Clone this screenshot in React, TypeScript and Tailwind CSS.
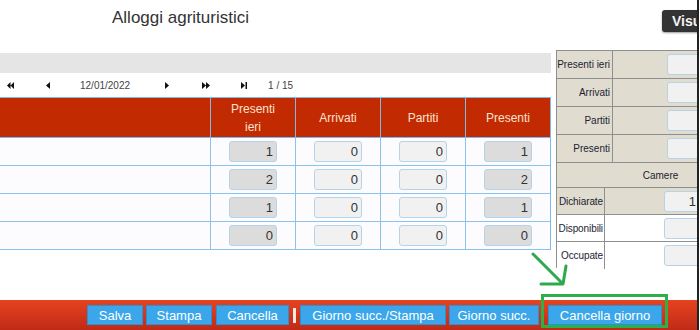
import React from 'react'

const rows = [
  { ieri: '1', arrivati: '0', partiti: '0', presenti: '1' },
  { ieri: '2', arrivati: '0', partiti: '0', presenti: '2' },
  { ieri: '1', arrivati: '0', partiti: '0', presenti: '1' },
  { ieri: '0', arrivati: '0', partiti: '0', presenti: '0' },
]

function Box({ value, readOnly, className = '' }: { value?: string; readOnly?: boolean; className?: string }) {
  return (
    <div
      className={
        'h-[21px] rounded-[3px] border border-[#b7d3e8] text-right pr-[3px] text-[13px] leading-[19px] text-[#333] ' +
        (readOnly ? 'bg-[#dcdcdc] ' : 'bg-[#f1f1f1] ') +
        className
      }
    >
      {value}
    </div>
  )
}

function NavIcon({ kind }: { kind: 'first' | 'prev' | 'next' | 'fast' | 'last' }) {
  if (kind === 'first')
    return (
      <svg width="7" height="7" viewBox="0 0 7 7">
        <path d="M3.5 0 L0 3.5 L3.5 7 Z M7 0 L3.5 3.5 L7 7 Z" fill="#111" />
      </svg>
    )
  if (kind === 'prev')
    return (
      <svg width="4" height="7" viewBox="0 0 4 7">
        <path d="M4 0 L0 3.5 L4 7 Z" fill="#111" />
      </svg>
    )
  if (kind === 'next')
    return (
      <svg width="4" height="7" viewBox="0 0 4 7">
        <path d="M0 0 L4 3.5 L0 7 Z" fill="#111" />
      </svg>
    )
  if (kind === 'fast')
    return (
      <svg width="8" height="7" viewBox="0 0 8 7">
        <path d="M0 0 L4 3.5 L0 7 Z M4 0 L8 3.5 L4 7 Z" fill="#111" />
      </svg>
    )
  return (
    <svg width="6" height="7" viewBox="0 0 6 7">
      <path d="M0 0 L4 3.5 L0 7 Z" fill="#111" />
      <rect x="4.5" y="0" width="1.5" height="7" fill="#111" />
    </svg>
  )
}

function PanelRow({ label, last }: { label: string; last?: boolean }) {
  return (
    <div className={'grid grid-cols-[56px_1fr] h-[28px] ' + (last ? '' : 'border-b border-[#8f8f8f]')}>
      <div className="border-r border-[#8f8f8f] flex items-center justify-end pr-[2px] text-[10px] text-[#1d1d33]">
        {label}
      </div>
      <div className="flex items-center pl-[54px]">
        <Box className="w-[48px]" />
      </div>
    </div>
  )
}

function CamereRow({ label, value, beige, last }: { label: string; value?: string; beige?: boolean; last?: boolean }) {
  return (
    <div
      className={
        'grid grid-cols-[48px_1fr] h-[27px] ' +
        (beige ? 'bg-[#e0dccf] ' : 'bg-white ') +
        (last ? '' : 'border-b border-[#8f8f8f]')
      }
    >
      <div className="border-r border-[#8f8f8f] flex items-center justify-end pr-[1px] text-[10px] tracking-[-0.1px] text-[#1d1d33]">
        {label}
      </div>
      <div className="flex items-center pl-[59px]">
        <Box value={value} className="w-[36px]" />
      </div>
    </div>
  )
}

export default function App() {
  return (
    <div className="w-[700px] h-[330px] bg-white relative overflow-hidden font-['Liberation_Sans',Arial,sans-serif]">
      <div className="w-[699px] h-full border-r-2 border-[#222] overflow-hidden flex flex-col">
        {/* header */}
        <div className="h-[50px] flex items-start shrink-0">
          <div className="w-[662px] shrink-0 pl-[112px] pt-[5px] text-[17px] text-[#333]">Alloggi agrituristici</div>
          <div className="mt-[10px] h-[22px] shrink-0 rounded-[3px] bg-[#333] pl-[10px] pr-[10px] text-[14px] leading-[22px] font-bold text-[#f4f4f4] shadow-[0_1px_2px_rgba(0,0,0,0.4)]">
            Visualizza
          </div>
        </div>

        {/* body */}
        <div className="h-[250px] flex shrink-0">
          <div className="w-[551px] shrink-0">
            <div className="mt-[3px] h-[20px] bg-[#e5e5e5]" />
            <div className="h-[24px] flex items-center text-[10px] text-[#444]">
              <span className="ml-[7px] flex"><NavIcon kind="first" /></span>
              <span className="ml-[32px] flex"><NavIcon kind="prev" /></span>
              <span className="ml-[30px]">12/01/2022</span>
              <span className="ml-[35px] flex"><NavIcon kind="next" /></span>
              <span className="ml-[33px] flex"><NavIcon kind="fast" /></span>
              <span className="ml-[31px] flex"><NavIcon kind="last" /></span>
              <span className="ml-[21px]">1 / 15</span>
            </div>
            <div className="w-[551px] border-t border-r border-[#7db9ea]">
              <div className="grid grid-cols-[211px_85px_85px_85px_84px] h-[40px] bg-[#c22a02] text-[12px] text-[#fde2cf] border-b border-[#7db9ea]">
                <div className="border-r border-[#7db9ea]" />
                <div className="border-r border-[#7db9ea] flex items-center justify-center text-center leading-[18px]">
                  Presenti
                  <br />
                  ieri
                </div>
                <div className="border-r border-[#7db9ea] flex items-center justify-center">Arrivati</div>
                <div className="border-r border-[#7db9ea] flex items-center justify-center">Partiti</div>
                <div className="flex items-center justify-center">Presenti</div>
              </div>
              {rows.map((r, i) => (
                <div
                  key={i}
                  className="grid grid-cols-[211px_85px_85px_85px_84px] h-[28px] bg-[#fcfbfd] border-b border-[#8cc3ee]"
                >
                  <div className="border-r border-[#8cc3ee]" />
                  <div className="border-r border-[#8cc3ee] flex items-center justify-center">
                    <Box value={r.ieri} readOnly className="w-[48px]" />
                  </div>
                  <div className="border-r border-[#8cc3ee] flex items-center justify-center">
                    <Box value={r.arrivati} className="w-[48px]" />
                  </div>
                  <div className="border-r border-[#8cc3ee] flex items-center justify-center">
                    <Box value={r.partiti} className="w-[48px]" />
                  </div>
                  <div className="flex items-center justify-center">
                    <Box value={r.presenti} readOnly className="w-[48px]" />
                  </div>
                </div>
              ))}
            </div>
          </div>

          {/* right panel */}
          <div className="ml-[5px] w-[208px] shrink-0 h-[218px] border-l border-t border-[#8f8f8f] bg-[#e0dccf]">
            <PanelRow label="Presenti ieri" />
            <PanelRow label="Arrivati" />
            <PanelRow label="Partiti" />
            <PanelRow label="Presenti" />
            <div className="h-[25px] border-b border-[#8f8f8f] flex items-center justify-center text-[10px] text-[#1d1d33]">
              Camere
            </div>
            <CamereRow label="Dichiarate" value="1" beige />
            <CamereRow label="Disponibili" />
            <CamereRow label="Occupate" last />
          </div>
        </div>

        {/* footer */}
        <div className="h-[30px] shrink-0 bg-gradient-to-b from-[#e6431f] to-[#bf2a18] flex items-center text-[13px] text-white">
          <button className="ml-[87px] w-[56px] h-[20px] bg-[#3ba6ea] border border-[#2c90d4]">Salva</button>
          <button className="ml-[3px] w-[66px] h-[20px] bg-[#3ba6ea] border border-[#2c90d4]">Stampa</button>
          <button className="ml-[4px] w-[73px] h-[20px] bg-[#3ba6ea] border border-[#2c90d4]">Cancella</button>
          <span className="ml-[4px] w-[3px] h-[15px] bg-[#fde9d9]" />
          <button className="ml-[4px] w-[146px] h-[20px] bg-[#3ba6ea] border border-[#2c90d4]">Giorno succ./Stampa</button>
          <button className="ml-[3px] w-[90px] h-[20px] bg-[#3ba6ea] border border-[#2c90d4]">Giorno succ.</button>
          <button className="ml-[9px] w-[114px] h-[20px] bg-[#3ba6ea] border border-[#2c90d4]">Cancella giorno</button>
        </div>
      </div>

      {/* highlight annotation */}
      <div className="absolute left-[541px] top-[294px] w-[127px] h-[34px] border-[3px] border-[#2bb04a]" />
      <svg className="absolute left-0 top-0 pointer-events-none" width="700" height="330">
        <path
          d="M533 254 L562 283 M541 284 L563 284 L566 266"
          stroke="#2eaa4c"
          strokeWidth="3"
          fill="none"
          strokeLinecap="round"
          strokeLinejoin="round"
        />
      </svg>
    </div>
  )
}
